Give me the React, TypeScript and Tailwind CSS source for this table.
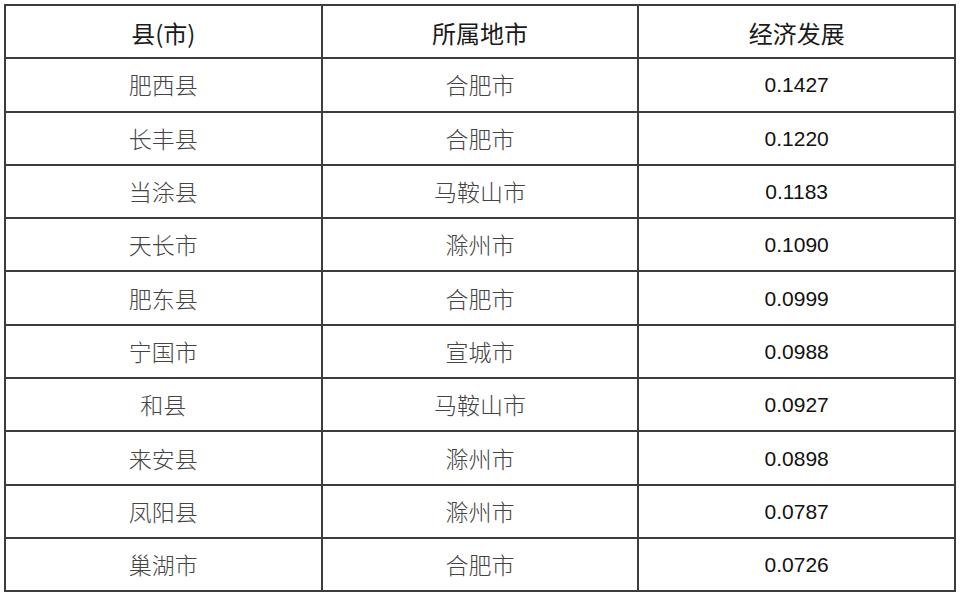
const rows: [string, string, string][] = [
  ["肥西县", "合肥市", "0.1427"],
  ["长丰县", "合肥市", "0.1220"],
  ["当涂县", "马鞍山市", "0.1183"],
  ["天长市", "滁州市", "0.1090"],
  ["肥东县", "合肥市", "0.0999"],
  ["宁国市", "宣城市", "0.0988"],
  ["和县", "马鞍山市", "0.0927"],
  ["来安县", "滁州市", "0.0898"],
  ["凤阳县", "滁州市", "0.0787"],
  ["巢湖市", "合肥市", "0.0726"],
];

const cjk = "font-['Noto_Sans_CJK_SC',sans-serif]";

export default function App() {
  return (
    <div className="w-[960px] h-[596px] bg-white pt-[4px] pl-[4px]">
      <table className="w-[952px] border-collapse border-2 border-[#3c3c3c] table-fixed">
        <thead>
          <tr className="h-[53.3px]">
            {["县(市)", "所属地市", "经济发展"].map((h) => (
              <th
                key={h}
                className={`border-2 border-[#3c3c3c] text-[24px] leading-none pt-[3px] font-normal text-[#1a1a1a] text-center ${cjk}`}
              >
                {h}
              </th>
            ))}
          </tr>
        </thead>
        <tbody>
          {rows.map(([county, city, value]) => (
            <tr key={county} className="h-[53.3px]">
              <td
                className={`border-2 border-[#3c3c3c] text-[23px] leading-none font-light text-[#444] text-center ${cjk}`}
              >
                {county}
              </td>
              <td
                className={`border-2 border-[#3c3c3c] text-[23px] leading-none font-light text-[#444] text-center ${cjk}`}
              >
                {city}
              </td>
              <td className="border-2 border-[#3c3c3c] text-[21px] leading-none text-[#111] text-center font-['Liberation_Sans',Arial,sans-serif]">
                {value}
              </td>
            </tr>
          ))}
        </tbody>
      </table>
    </div>
  );
}
